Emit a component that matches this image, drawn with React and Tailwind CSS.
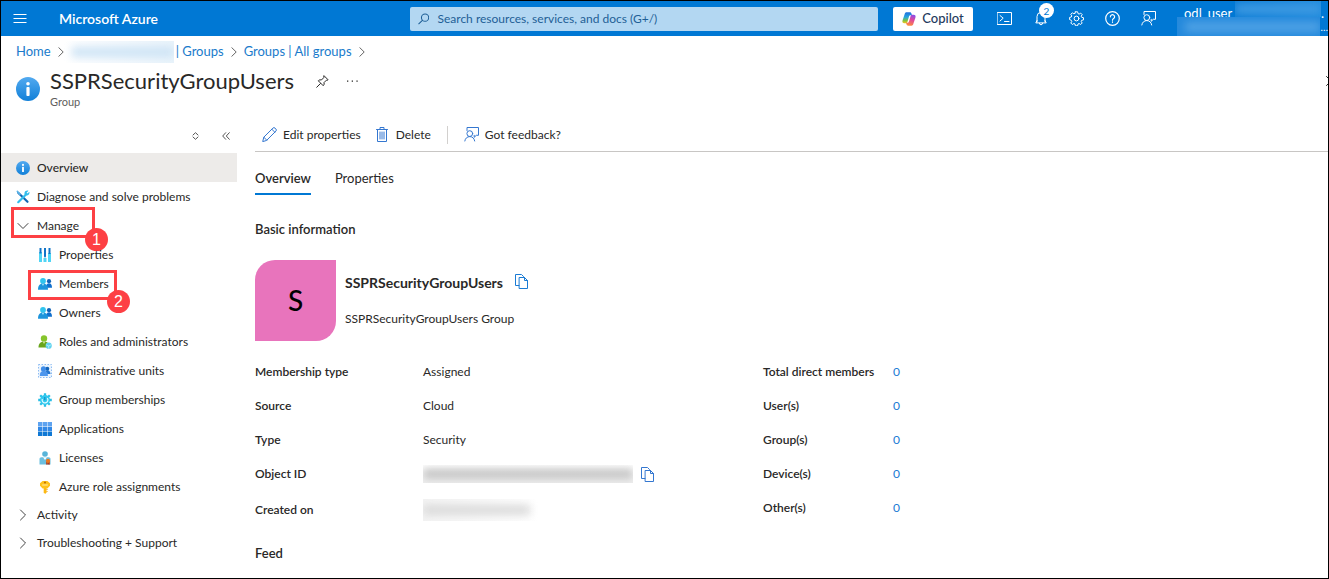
import React from "react";

const line = { fill: "none", stroke: "currentColor", strokeWidth: 1, strokeLinecap: "round", strokeLinejoin: "round" };

function MenuIcon() {
  return (
    <svg width="14" height="10" viewBox="0 0 14 10" {...line} strokeLinecap="butt">
      <path d="M0.5 0.5h13M0.5 4.5h13M0.5 8.5h13" />
    </svg>
  );
}

function SearchIcon() {
  return (
    <svg width="12" height="12" viewBox="0 0 12 12" {...line} strokeWidth="1.1">
      <circle cx="7.4" cy="4.6" r="3.8" />
      <path d="M4.6 7.4 0.8 11" />
    </svg>
  );
}

function CopilotIcon() {
  return (
    <svg width="14" height="14" viewBox="0 0 14 14">
      <defs>
        <linearGradient id="cpA" x1="0.3" y1="0" x2="0.3" y2="1">
          <stop offset="0" stopColor="#1d6fe0" />
          <stop offset="0.45" stopColor="#27a7dd" />
          <stop offset="0.75" stopColor="#7cc243" />
          <stop offset="1" stopColor="#f5c518" />
        </linearGradient>
        <linearGradient id="cpB" x1="0.7" y1="0" x2="0.4" y2="1">
          <stop offset="0" stopColor="#8a4fe8" />
          <stop offset="0.45" stopColor="#e0489c" />
          <stop offset="1" stopColor="#ff8a3c" />
        </linearGradient>
      </defs>
      <path fill="url(#cpA)" d="M9.6 1.9C9.3.8 8.8.3 7.8.3H4.6c-1 0-1.6.6-1.9 1.6L.6 8.2c-.6 1.9.1 3 1.8 3h1.4c.8 0 1.4-.5 1.6-1.3L7 4.6c.3-.9.8-1.3 1.6-1.3H10z" />
      <path fill="url(#cpB)" d="M4.4 12.1c.3 1.1.8 1.6 1.8 1.6h3.2c1 0 1.6-.6 1.9-1.6l2.1-6.3c.6-1.9-.1-3-1.8-3h-1.4c-.8 0-1.4.5-1.6 1.3L7 9.4c-.3.9-.8 1.3-1.6 1.3H4z" />
    </svg>
  );
}

function ShellIcon() {
  return (
    <svg width="15" height="13" viewBox="0 0 15 13" {...line} strokeLinejoin="miter">
      <path d="M0.5 0.5h14v12h-14zM3 3.5l3.2 2.7L3 9M7.5 9.5h4.5" />
    </svg>
  );
}

function BellIcon() {
  return (
    <svg width="12" height="15" viewBox="0 0 12 15" {...line}>
      <path d="M2 11V5.5a4 4 0 0 1 8 0V11M2 9.5.8 11.9h10.4L10 9.5M4.4 12.2a1.6 1.6 0 0 0 3.2 0" />
    </svg>
  );
}

function GearIcon() {
  return (
    <svg width="15" height="15" viewBox="0 0 15 15" {...line}>
      <circle cx="7.5" cy="7.5" r="2.4" />
      <path d="M6.4.8h2.2l.4 1.8 1.1.5 1.6-1 1.5 1.5-1 1.6.5 1.1 1.8.4v2.2l-1.8.4-.5 1.1 1 1.6-1.5 1.5-1.6-1-1.1.5-.4 1.8H6.4L6 13l-1.1-.5-1.6 1L1.8 12l1-1.6-.5-1.1L.6 8.6V6.4L2.3 6l.5-1.1-1-1.6 1.5-1.5 1.6 1L6 2.3z" />
    </svg>
  );
}

function HelpIcon() {
  return (
    <svg width="15" height="15" viewBox="0 0 15 15" {...line} strokeWidth="1.2">
      <circle cx="7.5" cy="7.5" r="6.8" />
      <path d="M5.4 5.8a2.1 2.1 0 1 1 3.2 1.8c-.8.5-1.1.8-1.1 1.6M7.5 10.9v.4" />
    </svg>
  );
}

function FeedbackIcon() {
  return (
    <svg width="15" height="15" viewBox="0 0 15 15" {...line} strokeLinejoin="miter">
      <path d="M3 3.5v-3h11.5v7.8h-2.2l-2.1 2V8.3" />
      <circle cx="5.8" cy="6.6" r="2.9" />
      <path d="M0.8 14c.4-2.700 2.400-4.400 5-4.400s4.500 1.700 4.900 4.400" />
    </svg>
  );
}

function Chevron({ className = "" }) {
  return (
    <svg className={className} width="6" height="10" viewBox="0 0 6 10" {...line}>
      <path d="M0.8 0.7 5.200 5 0.800 9.300" />
    </svg>
  );
}

function Caret({ open }) {
  return open ? (
    <svg width="14" height="14" viewBox="0 0 14 14" {...line}>
      <path d="M2 4.500 7 9.500l5-5" />
    </svg>
  ) : (
    <svg width="14" height="14" viewBox="0 0 14 14" {...line}>
      <path d="M4.500 2l5 5-5 5" />
    </svg>
  );
}

function InfoIcon({ large }) {
  return (
    <svg className={large ? "size-6" : "size-3.5"} viewBox="0 0 24 24">
      <defs>
        <linearGradient id="infoFill" x1="0" y1="0" x2="0" y2="1">
          <stop offset="0" stopColor="#53aaf0" />
          <stop offset="1" stopColor="#1180d8" />
        </linearGradient>
      </defs>
      <circle cx="12" cy="12" r="12" fill="url(#infoFill)" />
      <circle cx="12" cy="6.700" r="1.800" fill="#fff" />
      <rect x="10.400" y="10" width="3.200" height="9" rx="1" fill="#fff" />
    </svg>
  );
}

function PinIcon() {
  return (
    <svg width="13" height="13" viewBox="0 0 13 13" {...line}>
      <path d="M8.200.900l3.900 3.900-1 .5-.7-.1L8 7.600l.2 1.600-1 1.500L2.300 5.800l1.500-1 1.600.2 2.400-2.400-.1-.7zM4.500 8.500.7 12.300" />
    </svg>
  );
}

function SortIcon() {
  return (
    <svg width="7" height="8" viewBox="0 0 7 8" {...line}>
      <path d="M1 3 3.500.700 6 3M1 5l2.500 2.300L6 5" />
    </svg>
  );
}

function CollapseIcon() {
  return (
    <svg width="8" height="8" viewBox="0 0 8 8" {...line}>
      <path d="M3.700.700.700 4l3 3.300M7.300.700l-3 3.300 3 3.300" />
    </svg>
  );
}

function PencilIcon() {
  return (
    <svg width="15" height="15" viewBox="0 0 15 15" {...line}>
      <path d="M.8 14.200l1-4L10.900 1.100a1.500 1.500 0 0 1 2.100 0l.9.900a1.500 1.500 0 0 1 0 2.100L4.800 13.200zM9.800 2.200l3 3M1.800 10.200l3 3" />
    </svg>
  );
}

function TrashIcon() {
  return (
    <svg width="12" height="15" viewBox="0 0 12 15" {...line} strokeLinejoin="miter">
      <path d="M.5 2.500h11M4 2.500v-2h4v2M1.500 2.500v12h9v-12M4 5v7M6 5v7M8 5v7" />
    </svg>
  );
}

function CopyIcon() {
  return (
    <svg width="13" height="15" viewBox="0 0 13 15" {...line} strokeLinejoin="miter">
      <path d="M4 11.500H.5V.500h6L8.500 2.500" />
      <path d="M4.500 3.500h5l3 3v8h-8zM9.500 3.500v3h3" />
    </svg>
  );
}

function ToolsIcon() {
  return (
    <svg width="14" height="14" viewBox="0 0 14 14">
      <path d="M2.200 2.800l9.300 9" stroke="#1267b4" strokeWidth="2.200" strokeLinecap="round" />
      <path d="M3.900 4.500 1.300 1.300" stroke="#5bb4e8" strokeWidth="1.600" strokeLinecap="round" />
      <path d="M2.200 12.200 9.700 4.700" stroke="#32bdec" strokeWidth="2.200" strokeLinecap="round" />
      <path d="M12.500.800 10.600 2.700l.8.800 2-1.800c.4 1.800-.6 3.500-2.300 3.800C9.300 5.700 8.100 4.300 8.500 2.700 8.900 1 10.900.100 12.500.800z" fill="#32bdec" />
    </svg>
  );
}

function SlidersIcon() {
  return (
    <svg width="12" height="14" viewBox="0 0 12 14">
      <path fill="#50d5f5" d="M0 4h3v10H0zM4.500 10h3v4h-3zM9 5h3v9H9z" />
      <path fill="#0f74c8" d="M.5 0h2v5.500h-2zM5 0h2v8H5zM9.500 0h2v6h-2z" />
      <circle cx="6" cy="8.500" r="1" fill="#0f74c8" />
    </svg>
  );
}

function PeopleIcon() {
  return (
    <svg width="14" height="12" viewBox="0 0 14 12">
      <circle cx="11" cy="3.200" r="2.100" fill="#0f63b8" />
      <path d="M8 9.800c0-2.900 1-4.500 3-4.500s3 1.600 3 4.500z" fill="#0f6fce" />
      <circle cx="5" cy="3" r="2.900" fill="#30c4ee" />
      <path d="M0 11.700C0 8 1.500 5.600 5 5.600s5 2.400 5 6.100z" fill="#1c94dc" />
      <path d="M3.800 5.700 5 7.900l1.200-2.200z" fill="#a5e9fb" />
    </svg>
  );
}

function RolesIcon() {
  return (
    <svg width="14" height="14" viewBox="0 0 14 14">
      <circle cx="6" cy="3.400" r="3.200" fill="#86c52c" />
      <path d="M.5 12.500C.5 9 2.200 6.500 6 6.500s5.500 2.500 5.500 6z" fill="#69a51c" />
      <path d="M4.600 6.600 6 9l1.400-2.400z" fill="#c8e89a" />
      <circle cx="10.700" cy="10.700" r="3.100" fill="#62d3ef" />
      <path d="M8.100 9.800l2.600 1.200 2.800-1.400M10.700 11v2.700" stroke="#c9f4fd" strokeWidth=".7" fill="none" />
    </svg>
  );
}

function UnitsIcon() {
  return (
    <svg width="14" height="14" viewBox="0 0 14 14">
      <rect x=".5" y=".5" width="13" height="13" fill="#e9f3fd" stroke="#8fbcf3" strokeDasharray="1.500 1.500" />
      <path d="M7 10c0-2.600.8-3.800 2.500-3.800s2.800 1.300 3 3.800z" fill="#2475cf" />
      <circle cx="9.300" cy="4.800" r="2" fill="#1163b8" />
      <path d="M1.800 12c0-3 1-4.900 3.900-4.900s4.300 1.900 4.300 4.900z" fill="#4d96ed" />
      <circle cx="5.500" cy="4.900" r="2.600" fill="#3f8de8" />
    </svg>
  );
}

function CogIcon() {
  return (
    <svg width="14" height="14" viewBox="0 0 14 14">
      <path
        d="M7 .2v13.600M.2 7h13.600M2.200 2.200l9.600 9.600M11.800 2.200l-9.600 9.600"
        stroke="#28bfe6"
        strokeWidth="2.300"
      />
      <circle cx="7" cy="7" r="5" fill="#32c8ee" />
      <path d="M4.300 6a2.900 2.900 0 1 0 5-.8" fill="none" stroke="#e7fbff" strokeWidth="1.200" />
      <path d="M6.800 4v3.200" stroke="#0f8fc8" strokeWidth="1.200" />
    </svg>
  );
}

function GridIcon() {
  return (
    <svg width="14" height="14" viewBox="0 0 14 14">
      <path fill="#5ea3f0" d="M0 0h4.300v4.300H0zM4.800 0h4.300v4.300H4.800zM9.600 0H14v4.300H9.600z" />
      <path fill="#3288e6" d="M0 4.800h4.300v4.300H0zM4.800 4.800h4.300v4.300H4.800zM9.600 4.800H14v4.300H9.600z" />
      <path fill="#0f78d4" d="M0 9.600h4.300V14H0zM4.800 9.600h4.300V14H4.800zM9.600 9.600H14V14H9.600z" />
    </svg>
  );
}

function LicenseIcon() {
  return (
    <svg width="12" height="14" viewBox="0 0 12 14">
      <circle cx="6" cy="3" r="2.800" fill="#58b4d9" />
      <path d="M.5 13.500V8c0-1.100.700-1.800 1.800-1.800h7.400c1.100 0 1.800.7 1.800 1.800v5.500z" fill="#6bbfe0" />
      <path d="M4 6.200 6 9l2-2.800z" fill="#fff" />
      <path d="M7.200 10.500h1.600V14l-.8-.7-.8.700zM9 10.500h1.700V14l-.9-.7-.8.700z" fill="#b3381a" />
      <circle cx="9" cy="9.900" r="2.100" fill="#e8761e" />
    </svg>
  );
}

function KeyIcon() {
  return (
    <svg width="10" height="14" viewBox="0 0 10 14">
      <path d="M3.700 7.500h2.800v5L5.100 14l-1.400-1.400z" fill="#fdb913" />
      <path d="M6.500 9h1v1h-1zM6.500 11h1v1h-1z" fill="#e89a0c" />
      <path d="M2.600.900h4.800L10 3.200v2.600L7.400 8.500H2.600L0 5.800V3.200z" fill="#ffc21a" />
      <circle cx="5" cy="2.400" r="1" fill="#b66a05" />
      <path d="M2.200 5h5.600" stroke="#fff1b8" strokeWidth=".9" />
    </svg>
  );
}

function Marker({ number, className }) {
  return (
    <span className={`pointer-events-none absolute border-3 border-[#fd4044] ${className}`}>
      <span className="absolute -right-4 -bottom-4 flex size-[23px] items-center justify-center rounded-full bg-[#fd4044] font-['Liberation_Sans',sans-serif] text-base leading-none text-white">
        {number}
      </span>
    </span>
  );
}

function NavItem({ icon, label, nested, active, marker }) {
  return (
    <li className="relative">
      <a
        href="#"
        aria-current={active ? "page" : undefined}
        className={`flex h-[29px] items-center gap-1.5 ${nested ? "pl-9" : "pl-3.5"} ${active ? "bg-[#edebe9] font-medium" : ""}`}
      >
        <span className="flex w-4 shrink-0 justify-center">{icon}</span>
        {label}
      </a>
      {marker}
    </li>
  );
}

function NavGroup({ label, open, marker, children }) {
  return (
    <li>
      <div className="relative">
        <button type="button" aria-expanded={!!open} className={`flex w-full items-center gap-1.5 pl-3.5 ${open ? "h-[29px]" : "h-7"}`}>
          <span className="flex w-4 shrink-0 justify-center text-[#444]">
            <Caret open={open} />
          </span>
          {label}
        </button>
        {marker}
      </div>
      {children && <ul>{children}</ul>}
    </li>
  );
}

function Redacted({ className, barClass }) {
  return (
    <span aria-hidden="true" className={`flex items-center overflow-hidden ${className}`}>
      <span className={`h-2.5 w-full blur-[4px] ${barClass}`} />
    </span>
  );
}

const counts = [
  ["Total direct members", 0],
  ["User(s)", 0],
  ["Group(s)", 0],
  ["Device(s)", 0],
  ["Other(s)", 0],
];

function Property({ label, children, className = "" }) {
  return (
    <div className={`flex h-[34px] items-center ${className}`}>
      <dt className="w-[168px] shrink-0 font-semibold">{label}</dt>
      <dd className="flex items-center">{children}</dd>
    </div>
  );
}

function TopBar() {
  return (
    <header className="flex h-[35px] items-center overflow-hidden bg-[#0078d4] text-white">
      <button type="button" aria-label="Menu" className="ml-3">
        <MenuIcon />
      </button>
      <a href="#" className="ml-8 w-[351px] shrink text-sm font-semibold">
        Microsoft Azure
      </a>
      <div className="flex h-6 max-w-[468px] grow items-center gap-2 rounded-xs bg-[#b3d7f2] px-2 text-[#1f5f96]">
        <SearchIcon />
        <input
          type="text"
          aria-label="Search"
          placeholder="Search resources, services, and docs (G+/)"
          className="w-full bg-transparent outline-none placeholder:text-[#1f5f96]"
        />
      </div>
      <button type="button" className="ml-[15px] flex h-6 w-20 shrink-0 items-center justify-center gap-1.5 rounded-xs bg-white text-[13px] font-medium text-[#243a5e]">
        <CopilotIcon />
        Copilot
      </button>
      <div className="ml-6 flex shrink-0 items-center gap-[21px]">
        <button type="button" aria-label="Cloud Shell"><ShellIcon /></button>
        <button type="button" aria-label="Notifications" className="relative flex w-[15px] justify-center">
          <BellIcon />
          <span className="absolute -top-2 left-1.5 flex size-[15px] items-center justify-center rounded-full bg-white text-[10px] leading-none text-[#0078d4]">2</span>
        </button>
        <button type="button" aria-label="Settings"><GearIcon /></button>
        <button type="button" aria-label="Help"><HelpIcon /></button>
        <button type="button" aria-label="Feedback"><FeedbackIcon /></button>
      </div>
      <button type="button" aria-label="Account" className="ml-[21px] flex h-full w-[151px] shrink-0 flex-col text-left text-[13px]">
        <span className="flex h-4 w-full pl-[7px] leading-6">
          <span className="w-[51px]">odl_user</span>
          <Redacted className="h-4 w-[86px] bg-linear-to-r from-[#0c7dd6] to-[#1f8bdd]" barClass="bg-[#3f9ae2]" />
          <span>.</span>
        </span>
        <span className="relative flex w-full text-[10px]">
          <Redacted className="h-[19px] w-[144px] bg-[#2489dc]" barClass="ml-2 bg-[#51a3e5]" />
          <span className="leading-5">…</span>
        </span>
      </button>
    </header>
  );
}

export default function App() {
  return (
    <div className="min-h-screen overflow-hidden border border-black bg-white font-['Lato','Open_Sans',sans-serif] text-xs text-[#292827]">
      <TopBar />

      <nav aria-label="Breadcrumb" className="flex h-8 items-center pl-[15px] text-[13px] text-[#1a7bcb]">
        <a href="#">Home</a>
        <Chevron className="ml-[7px] text-[#666]" />
        <Redacted className="h-[22px] w-[110px] bg-linear-to-r from-white to-[#eaf4fb]" barClass="ml-2 bg-[#cde3f5]" />
        <a href="#" className="ml-0.5">| Groups</a>
        <Chevron className="mx-[7px] text-[#666]" />
        <a href="#">Groups | All groups</a>
        <Chevron className="ml-[7px] text-[#666]" />
      </nav>

      <div className="flex h-[50px] items-start pl-[15px]">
        <span className="mt-[9px] mr-2.5"><InfoIcon large /></span>
        <div>
          <div className="flex h-[26px] items-center">
            <h1 className="text-[22px] leading-6">SSPRSecurityGroupUsers</h1>
            <button type="button" aria-label="Pin" className="ml-[22px]"><PinIcon /></button>
            <button type="button" aria-label="More" className="ml-[18px]">
              <svg width="11" height="2" viewBox="0 0 11 2" fill="currentColor">
                <path d="M0 .500h1.300v1.300H0zM4.700.500H6v1.300H4.700zM9.400.500h1.300v1.300H9.400z" />
              </svg>
            </button>
          </div>
          <p className="text-[11px] leading-4 text-[#605e5c]">Group</p>
        </div>
        <button type="button" aria-label="Close" className="-mr-2 mt-2 ml-auto">
          <svg width="10" height="10" viewBox="0 0 10 10" {...line}><path d="M.5.500l9 9M9.500.500l-9 9" /></svg>
        </button>
      </div>

      <div className="flex">
        <aside className="w-[236px] shrink-0">
          <div className="flex h-[35px] items-center justify-end gap-[23px] pr-[7px] text-[#555]">
            <button type="button" aria-label="Expand all"><SortIcon /></button>
            <button type="button" aria-label="Collapse menu"><CollapseIcon /></button>
          </div>
          <nav aria-label="Group">
            <ul>
              <NavItem active icon={<InfoIcon />} label="Overview" />
              <NavItem icon={<ToolsIcon />} label="Diagnose and solve problems" />
              <NavGroup open label="Manage" marker={<Marker number={1} className="-top-1 left-2.5 h-[31px] w-[84px]" />}>
                <NavItem nested icon={<SlidersIcon />} label="Properties" />
                <NavItem nested icon={<PeopleIcon />} label="Members" marker={<Marker number={2} className="top-px left-[27px] h-[30px] w-[89px]" />} />
                <NavItem nested icon={<PeopleIcon />} label="Owners" />
                <NavItem nested icon={<RolesIcon />} label="Roles and administrators" />
                <NavItem nested icon={<UnitsIcon />} label="Administrative units" />
                <NavItem nested icon={<CogIcon />} label="Group memberships" />
                <NavItem nested icon={<GridIcon />} label="Applications" />
                <NavItem nested icon={<LicenseIcon />} label="Licenses" />
                <NavItem nested icon={<KeyIcon />} label="Azure role assignments" />
              </NavGroup>
              <NavGroup label="Activity" />
              <NavGroup label="Troubleshooting + Support" />
            </ul>
          </nav>
        </aside>

        <main className="min-w-0 grow pl-[18px]">
          <div className="flex h-[34px] items-center border-b border-[#c8c6c4] pl-[7px]">
            <button type="button" className="flex items-center gap-1.5">
              <span className="text-[#3477d0]"><PencilIcon /></span>
              Edit properties
            </button>
            <button type="button" className="ml-[15px] flex items-center gap-2">
              <span className="text-[#3477d0]"><TrashIcon /></span>
              Delete
            </button>
            <span className="mx-4 h-[18px] w-px bg-[#d2d0ce]" />
            <button type="button" className="flex items-center gap-1.5">
              <span className="text-[#3477d0]"><FeedbackIcon /></span>
              Got feedback?
            </button>
          </div>

          <div role="tablist" className="mt-3 flex gap-6 text-[13px]">
            <button type="button" role="tab" aria-selected="true" className="h-[31px] border-b-2 border-[#0078d4] font-semibold">
              Overview
            </button>
            <button type="button" role="tab" aria-selected="false" className="h-[31px] border-b-2 border-transparent">
              Properties
            </button>
          </div>

          <h2 className="mt-[26px] text-[13px] leading-4 font-semibold">Basic information</h2>

          <div className="mt-[23px] flex gap-[9px]">
            <div className="flex size-[81px] items-center justify-center rounded-tl-[20px] rounded-br-[20px] bg-[#e874bc] text-[28px] font-medium text-black">
              S
            </div>
            <div className="pt-3">
              <div className="flex h-5 items-start gap-3">
                <h3 className="mt-px text-sm font-bold">SSPRSecurityGroupUsers</h3>
                <button type="button" aria-label="Copy name" className="mt-0.5 text-[#1a7bd4]"><CopyIcon /></button>
              </div>
              <p className="mt-[19px] leading-4">SSPRSecurityGroupUsers Group</p>
            </div>
          </div>

          <div className="mt-3.5 flex">
            <dl className="w-[508px]">
              <Property label="Membership type">Assigned</Property>
              <Property label="Source">Cloud</Property>
              <Property label="Type">Security</Property>
              <Property label="Object ID">
                <Redacted className="h-[18px] w-[210px] bg-linear-to-b from-white to-[#f0f0f0]" barClass="bg-[#c2c2c2]" />
                <button type="button" aria-label="Copy object ID" className="ml-2 text-[#3477d0]"><CopyIcon /></button>
              </Property>
              <Property label="Created on" className="mt-0.5">
                <Redacted className="h-[22px] w-[115px] bg-linear-to-r from-[#f4f4f4] to-white" barClass="mr-2 bg-[#dadada]" />
              </Property>
            </dl>
            <dl>
              {counts.map(([label, value]) => (
                <div key={label} className="flex h-[34px] items-center">
                  <dt className="w-[130px] font-semibold">{label}</dt>
                  <dd><a href="#" className="text-[#1a7bd4]">{value}</a></dd>
                </div>
              ))}
            </dl>
          </div>

          <h2 className="mt-[18px] text-[13px] leading-4 font-semibold">Feed</h2>
        </main>
      </div>
    </div>
  );
}
